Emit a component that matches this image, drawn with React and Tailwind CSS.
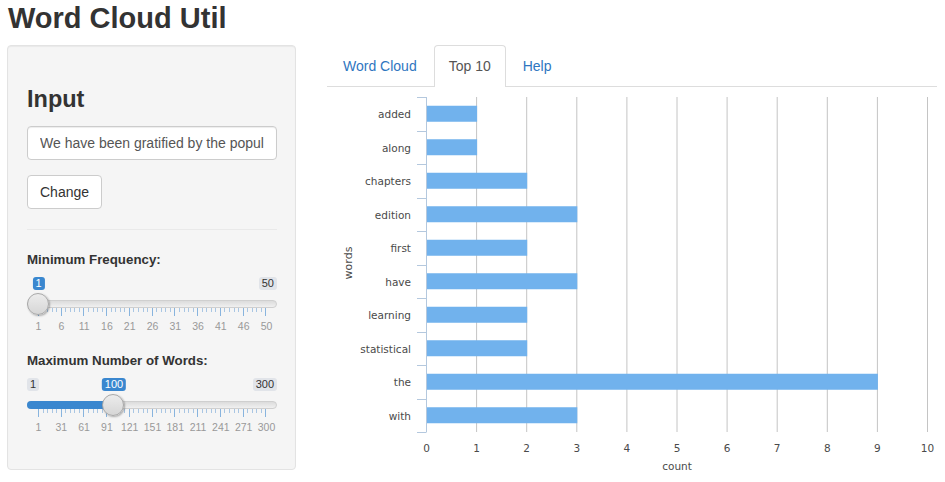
import React from "react";

const words = [
  ["added", 1],
  ["along", 1],
  ["chapters", 2],
  ["edition", 3],
  ["first", 2],
  ["have", 3],
  ["learning", 2],
  ["statistical", 2],
  ["the", 9],
  ["with", 3],
];

function Slider({ min, max, value, labels, showMin }) {
  const frac = (value - min) / (max - min);
  const pos = 11 + frac * 228;
  const ticks = Array.from({ length: 51 }, (_, i) => i);
  return (
    <div className="w-[250px] pb-[2px] pt-[7px]">
      <div className="relative flex h-[13px] justify-between">
        <div
          className={
            "rounded-[3px] bg-[#e1e4e9] px-[3px] text-[11px] leading-[13px] text-[#333] " +
            (showMin ? "" : "invisible")
          }
        >
          {min}
        </div>
        <div className="rounded-[3px] bg-[#e1e4e9] px-[3px] text-[11px] leading-[13px] text-[#333]">
          {max}
        </div>
        <div
          className="absolute top-0 -translate-x-1/2 rounded-[3px] bg-[#3a87cf] px-[3px] text-[11px] leading-[13px] text-white"
          style={{ left: pos + 0.5 }}
        >
          {value}
        </div>
      </div>
      <div className="relative mt-[10px] h-[8px] rounded-full border border-[#cfcfcf] bg-gradient-to-b from-[#dcdcdc] to-[#f0f0f0]">
        {frac > 0 && (
          <div
            className="absolute -left-px -top-px h-[8px] rounded-l-full bg-[#3a87cf]"
            style={{ width: pos + 1 }}
          />
        )}
        <div
          className="absolute top-[-8px] h-[22px] w-[22px] rounded-full border border-[#a8a8a8] bg-gradient-to-b from-[#ececec] to-[#d6d6d6] shadow-[1px_1px_2px_rgba(0,0,0,0.3)]"
          style={{ left: pos - 12 }}
        />
      </div>
      <div className="ml-[11px] flex h-[8px] w-[229px] items-start justify-between">
        {ticks.map((i) => (
          <div
            key={i}
            className={
              i % 5 === 0
                ? "h-[8px] w-px bg-[#88b4de]"
                : "h-[4px] w-px bg-[#a9c6e3]"
            }
          />
        ))}
      </div>
      <div className="ml-[11px] mt-[4px] flex w-[229px] justify-between">
        {labels.map((l, i) => (
          <div key={i} className="flex w-px justify-center">
            <span className="whitespace-nowrap text-[10.5px] leading-[13px] text-[#999]">
              {l}
            </span>
          </div>
        ))}
      </div>
    </div>
  );
}

function Chart() {
  const ax = 99.5;
  const step = 50.1;
  const top = 10;
  const row = 33.5;
  const bottom = top + row * 10;
  return (
    <svg width="610" height="395" className="block">
      {Array.from({ length: 10 }, (_, i) => (
        <line
          key={"g" + i}
          x1={ax + step * (i + 1)}
          x2={ax + step * (i + 1)}
          y1={top}
          y2={bottom}
          stroke="#c4c4c4"
          strokeWidth="1"
        />
      ))}
      {words.map(([w, c], i) => (
        <rect
          key={w}
          x={ax + 0.5}
          y={top + row * i + 8.75}
          width={c * step}
          height="16"
          fill="#71b2ed"
        />
      ))}
      <line x1={ax} x2={ax} y1={top} y2={bottom} stroke="#b4c8de" strokeWidth="1" />
      {Array.from({ length: 11 }, (_, k) => (
        <line
          key={"t" + k}
          x1={90}
          x2={ax}
          y1={Math.round(top + row * k) + 0.5}
          y2={Math.round(top + row * k) + 0.5}
          stroke="#b4c8de"
          strokeWidth="1"
        />
      ))}
      <g fontFamily="'DejaVu Sans', sans-serif" fontSize="10.5" fill="#4a4a4a">
        {words.map(([w], i) => (
          <text
            key={"y" + w}
            x="84"
            y={top + row * i + row / 2 + 4.5}
            textAnchor="end"
          >
            {w}
          </text>
        ))}
        {Array.from({ length: 11 }, (_, i) => (
          <text key={"x" + i} x={ax + step * i} y="365" textAnchor="middle">
            {i}
          </text>
        ))}
        <text x="350" y="383" textAnchor="middle">
          count
        </text>
        <text
          x="0"
          y="0"
          textAnchor="middle"
          fontSize="11"
          transform="translate(25 176) rotate(-90)"
        >
          words
        </text>
      </g>
    </svg>
  );
}

export default function App() {
  return (
    <div
      className="min-h-[482px] w-[945px] bg-white px-[7px] text-[14px] text-[#333]"
      style={{ fontFamily: "'Liberation Sans', Arial, sans-serif" }}
    >
      <div className="h-[45px] pt-[1px]">
        <h1 className="ml-[1px] text-[29px] font-bold leading-[34px] text-[#333]">
          Word Cloud Util
        </h1>
      </div>
      <div className="flex items-start gap-[31px]">
        <div className="w-[289px] rounded-[4px] border border-[#e3e3e3] bg-[#f5f5f5] p-[19px] shadow-[inset_0_1px_1px_rgba(0,0,0,0.05)]">
          <h3 className="mt-[21px] text-[23.5px] font-bold leading-[26px] text-[#333]">
            Input
          </h3>
          <input
            readOnly
            value="We have been gratified by the popularity of the first edition"
            className="mt-[14px] block h-[34px] w-[250px] rounded-[4px] border border-[#ccc] bg-white px-[12px] text-[14px] text-[#555] shadow-[inset_0_1px_1px_rgba(0,0,0,0.075)] outline-none"
          />
          <button className="mt-[15px] block h-[34px] rounded-[4px] border border-[#ccc] bg-white px-[12px] text-[14px] text-[#333]">
            Change
          </button>
          <div className="mt-[20px] h-px w-[250px] bg-[#e9e9e9]" />
          <div className="mt-[20px] text-[13.3px] font-bold leading-[20px]">
            Minimum Frequency:
          </div>
          <Slider
            min={1}
            max={50}
            value={1}
            showMin={false}
            labels={["1", "6", "11", "16", "21", "26", "31", "36", "41", "46", "50"]}
          />
          <div className="mt-[16px] text-[13.3px] font-bold leading-[20px]">
            Maximum Number of Words:
          </div>
          <Slider
            min={1}
            max={300}
            value={100}
            showMin={true}
            labels={["1", "31", "61", "91", "121", "151", "181", "211", "241", "271", "300"]}
          />
          <div className="h-[14px]" />
        </div>
        <div className="w-[610px]">
          <div className="flex h-[42px] border-b border-[#ddd] pl-px">
            <div className="mr-[2px] px-[15px] py-[11px] leading-[20px] text-[#2f76bf]">
              Word Cloud
            </div>
            <div className="-mb-px mr-[2px] rounded-t-[4px] border border-b-0 border-[#ddd] bg-white px-[14px] py-[10px] leading-[21px] text-[#555]">
              Top 10
            </div>
            <div className="px-[15px] py-[11px] leading-[20px] text-[#2f76bf]">
              Help
            </div>
          </div>
          <Chart />
        </div>
      </div>
    </div>
  );
}
